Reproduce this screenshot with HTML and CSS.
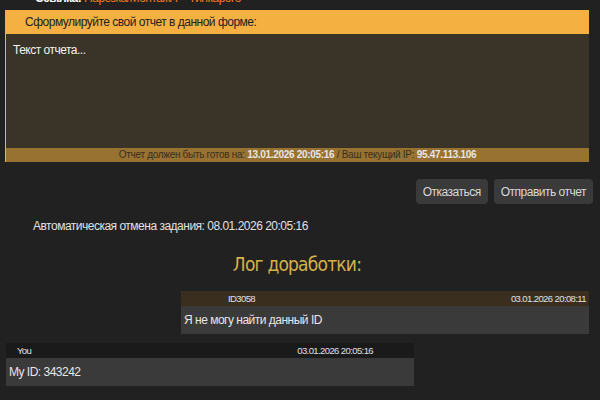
FILE: index.html
```html
<!DOCTYPE html>
<html lang="ru">
<head>
  <meta charset="UTF-8">
  <title>Отчет</title>
  <link rel="stylesheet" href="styles.css">
</head>
<body>
  <div class="page">
    <div class="link-row"><b>Ссылка:</b> <a href="#">Нарезка/Монтаж/Т - Тинкарого</a></div>

    <div class="report-box">
      <div class="report-title">Сформулируйте свой отчет в данной форме:</div>
      <textarea class="report-text" placeholder="Текст отчета..."></textarea>
      <div class="report-foot">Отчет должен быть готов на: <b>13.01.2026 20:05:16</b> / Ваш текущий IP: <b>95.47.113.106</b></div>
    </div>

    <div class="actions">
      <button class="btn">Отказаться</button>
      <button class="btn">Отправить отчет</button>
    </div>

    <p class="auto-cancel">Автоматическая отмена задания: 08.01.2026 20:05:16</p>

    <h2 class="log-title">Лог доработки:</h2>

    <div class="log">
      <div class="msg msg-admin">
        <div class="msg-head"><span class="msg-author">ID3058</span><span>03.01.2026 20:08:11</span></div>
        <div class="msg-body">Я не могу найти данный ID</div>
      </div>
      <div class="msg msg-you">
        <div class="msg-head"><span class="msg-author">You</span><span>03.01.2026 20:05:16</span></div>
        <div class="msg-body">My ID: 343242</div>
      </div>
    </div>
  </div>
</body>
</html>
```

FILE: styles.css
```css
:root {
  --fon: #212121;
  --oranzh: #f5b042;
  --pole: #3a3328;
  --podval: #977230;
  --seryj: #3a3a3a;
  --zoloto: #d4b24a;
}

body {
  margin: 0;
  background-color: var(--fon);
  color: #e6e6e6;
  font-family: "Liberation Sans", Arial, sans-serif;
  font-size: 12px;
  letter-spacing: -0.5px;
  overflow: hidden;
  height: 400px;
}

.page {
  padding: 0 11px 0 5px;
}

.link-row {
  margin-top: -10px;
  height: 20px;
  line-height: 16px;
  padding-left: 30px;
  color: #fff;
}

.link-row a {
  color: #f07a1e;
  text-decoration: none;
}

.report-box {
  border-left: 1px solid var(--oranzh);
  display: flex;
  flex-direction: column;
}

.report-title {
  background-color: var(--oranzh);
  color: #222;
  height: 24px;
  line-height: 24px;
  padding-left: 19px;
}

.report-text {
  background-color: var(--pole);
  color: #f2f2f2;
  border: none;
  height: 114px;
  padding: 9px 7px;
  box-sizing: border-box;
  resize: none;
  font-family: inherit;
  font-size: 12px;
  letter-spacing: -0.5px;
  outline: none;
}

.report-text::placeholder {
  color: #f2f2f2;
}

.report-foot {
  background-color: var(--podval);
  color: #3a3020;
  height: 14px;
  line-height: 14px;
  font-size: 10px;
  letter-spacing: -0.3px;
  text-align: center;
}

.report-foot b {
  color: #e6e6e6;
}

.actions {
  display: flex;
  justify-content: flex-end;
  gap: 6px;
  margin: 17px -4px 0 0;
}

.btn {
  background-color: var(--seryj);
  color: #d8d8d8;
  border: none;
  border-radius: 4px;
  height: 25px;
  padding: 0 7px;
  font-family: inherit;
  font-size: 12px;
  letter-spacing: -0.5px;
  cursor: pointer;
}

.auto-cancel {
  margin: 15px 0 0 28px;
  color: #e0e0e0;
}

.log-title {
  margin: 20px 0 16px;
  text-align: center;
  color: var(--zoloto);
  font-family: "DejaVu Sans Condensed", "DejaVu Sans", sans-serif;
  font-weight: normal;
  font-size: 19px;
  letter-spacing: -0.8px;
}

.log {
  display: flex;
  flex-direction: column;
  gap: 9px;
}

.msg {
  width: 408px;
}

.msg-admin {
  align-self: flex-end;
}

.msg-you {
  margin-left: 1px;
}

.msg-head {
  display: flex;
  justify-content: space-between;
  height: 15px;
  line-height: 15px;
  font-size: 9.5px;
  letter-spacing: -0.6px;
  padding-right: 3px;
  color: #e0e0e0;
}

.msg-admin .msg-head {
  background-color: #3a2f1f;
  padding-left: 47px;
}

.msg-you .msg-head {
  background-color: #1a1a1a;
  padding-left: 11px;
  padding-right: 41px;
}

.msg-body {
  background-color: var(--seryj);
  height: 28px;
  line-height: 28px;
  padding-left: 3px;
}
```
